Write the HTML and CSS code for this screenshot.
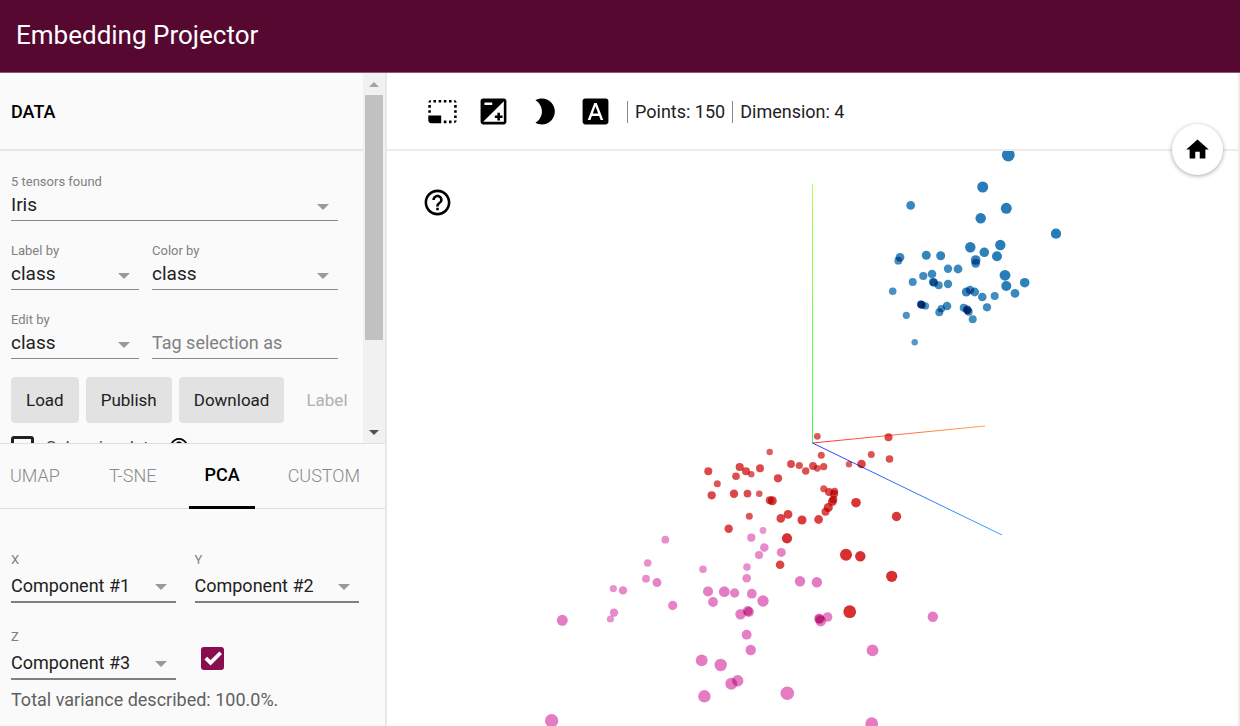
FILE: index.html
```html
<!DOCTYPE html>
<html lang="en">
<head>
<meta charset="utf-8">
<title>Embedding Projector</title>
<link rel="stylesheet" href="styles.css">
</head>
<body>
<header class="app-bar"><h1 class="app-title">Embedding Projector</h1></header>
<div class="workspace">
  <aside class="sidebar">
    <section class="data-panel">
      <div class="data-content">
        <h2 class="panel-title">DATA</h2>
        <div class="data-form">
          <div class="field">
            <label class="field-label" for="tensor">5 tensors found</label>
            <div class="select-box"><select id="tensor" class="control"><option>Iris</option></select></div>
          </div>
          <div class="field-row">
            <div class="field">
              <label class="field-label" for="label-by">Label by</label>
              <div class="select-box"><select id="label-by" class="control"><option>class</option></select></div>
            </div>
            <div class="field">
              <label class="field-label" for="color-by">Color by</label>
              <div class="select-box"><select id="color-by" class="control"><option>class</option></select></div>
            </div>
          </div>
          <div class="field-row">
            <div class="field">
              <label class="field-label" for="edit-by">Edit by</label>
              <div class="select-box"><select id="edit-by" class="control"><option>class</option></select></div>
            </div>
            <div class="field field-bare">
              <input id="tag" class="control control-text" type="text" placeholder="Tag selection as" aria-label="Tag selection as">
            </div>
          </div>
          <div class="actions">
            <button class="btn" type="button">Load</button>
            <button class="btn" type="button">Publish</button>
            <button class="btn" type="button">Download</button>
            <button class="btn btn-flat" type="button" disabled>Label</button>
          </div>
          <div class="sphereize">
            <input id="sphereize" class="check" type="checkbox">
            <label class="sphereize-label" for="sphereize">Sphereize data</label>
            <svg class="hint-icon" viewBox="2 2 20 20" aria-hidden="true"><path d="M11 18h2v-2h-2v2zm1-16C6.48 2 2 6.48 2 12s4.48 10 10 10 10-4.48 10-10S17.52 2 12 2zm0 18c-4.41 0-8-3.59-8-8s3.59-8 8-8 8 3.59 8 8-3.59 8-8 8zm0-14c-2.21 0-4 1.79-4 4h2c0-1.1.9-2 2-2s2 .9 2 2c0 2-3 1.75-3 5h2c0-2.25 3-2.5 3-5 0-2.21-1.79-4-4-4z"/></svg>
          </div>
        </div>
      </div>
      <div class="scrollbar" aria-hidden="true">
        <span class="arrow arrow-up"></span>
        <span class="track"><span class="thumb"></span></span>
        <span class="arrow arrow-down"></span>
      </div>
    </section>
    <section class="projection">
      <nav class="tabs">
        <button class="tab" type="button">UMAP</button>
        <button class="tab" type="button">T-SNE</button>
        <button class="tab tab-active" type="button">PCA</button>
        <button class="tab" type="button">CUSTOM</button>
      </nav>
      <div class="pca-form">
        <div class="field">
          <label class="field-label" for="pca-x">X</label>
          <div class="select-box"><select id="pca-x" class="control"><option>Component #1</option></select></div>
        </div>
        <div class="field">
          <label class="field-label" for="pca-y">Y</label>
          <div class="select-box"><select id="pca-y" class="control"><option>Component #2</option></select></div>
        </div>
        <div class="field">
          <label class="field-label" for="pca-z">Z</label>
          <div class="select-box"><select id="pca-z" class="control"><option>Component #3</option></select></div>
        </div>
        <label class="z-toggle">
          <input class="check" type="checkbox" checked aria-label="Use Z component">
          <svg class="tick" viewBox="0 0 24 24" aria-hidden="true"><path d="M5 11.500l5 5L20.500 6"/></svg>
        </label>
      </div>
      <p class="variance">Total variance described: 100.0%.</p>
    </section>
  </aside>
  <main class="stage">
    <div class="toolbar">
      <div class="tools">
        <button class="icon-btn" type="button" aria-label="Bounding box selection"><svg viewBox="0 0 24 24"><path d="M23 15h-2v2h2v-2zm0-4h-2v2h2v-2zm0 8h-2v2c1 0 2-1 2-2zM15 3h-2v2h2V3zm8 4h-2v2h2V7zm-2-4v2h2c0-1-1-2-2-2zM3 21h8v-6H1v4c0 1.100.9 2 2 2zM3 7H1v2h2V7zm12 12h-2v2h2v-2zm4-16h-2v2h2V3zm0 16h-2v2h2v-2zM3 3C2 3 1 4 1 5h2V3zm0 8H1v2h2v-2zm8-8H9v2h2V3zM7 3H5v2h2V3z"/></svg></button>
        <button class="icon-btn" type="button" aria-label="Edit mode"><svg viewBox="0 0 24 24"><path d="M15 17v2h2v-2h2v-2h-2v-2h-2v2h-2v2h2zm5-15H4c-1.100 0-2 .9-2 2v16c0 1.100.9 2 2 2h16c1.100 0 2-.9 2-2V4c0-1.100-.9-2-2-2zM5 5h6v2H5V5zm15 15H4L20 4v16z"/></svg></button>
        <button class="icon-btn" type="button" aria-label="Night mode"><svg viewBox="0 0 24 24"><path d="M10 2c-1.820 0-3.530.5-5 1.350C7.990 5.080 10 8.300 10 12s-2.010 6.920-5 8.650C6.470 21.500 8.180 22 10 22c5.520 0 10-4.480 10-10S15.520 2 10 2z"/></svg></button>
        <button class="icon-btn" type="button" aria-label="3D labels mode"><svg viewBox="0 0 24 24"><path d="M9.930 13.500h4.140L12 7.980zM20 2H4c-1.100 0-2 .9-2 2v16c0 1.100.9 2 2 2h16c1.100 0 2-.9 2-2V4c0-1.100-.9-2-2-2zm-4.050 16.500l-1.140-3H9.170l-1.120 3H5.960l5.110-13h1.860l5.110 13h-2.090z"/></svg></button>
      </div>
      <div class="stats">
        <span class="stat">Points: 150</span>
        <span class="stat">Dimension: 4</span>
      </div>
    </div>
    <div class="plot">
      <svg id="scene" class="scene" viewBox="387 151 851 575" preserveAspectRatio="xMidYMin slice" role="img" aria-label="Iris points projected on three components">
        <defs>
          <linearGradient id="axis-y" gradientUnits="userSpaceOnUse" x1="812" y1="443" x2="812" y2="184"><stop offset="0" stop-color="#33ff4d"/><stop offset="1" stop-color="#b3ff4d"/></linearGradient>
          <linearGradient id="axis-x" gradientUnits="userSpaceOnUse" x1="812" y1="443" x2="985" y2="426"><stop offset="0" stop-color="#ff3333"/><stop offset="1" stop-color="#ffa64d"/></linearGradient>
          <linearGradient id="axis-z" gradientUnits="userSpaceOnUse" x1="812" y1="443" x2="1002" y2="535"><stop offset="0" stop-color="#3333ff"/><stop offset="1" stop-color="#33a6ff"/></linearGradient>
        </defs>
        <path d="M812.500 443V184" stroke="url(#axis-y)"/>
        <path d="M812.500 443L985 426" stroke="url(#axis-x)"/>
        <path d="M812.500 443L1002 535" stroke="url(#axis-z)"/>
      </svg>
      <button class="icon-btn help-btn" type="button" aria-label="Help"><svg viewBox="0 0 24 24"><path d="M11 18h2v-2h-2v2zm1-16C6.480 2 2 6.480 2 12s4.480 10 10 10 10-4.480 10-10S17.520 2 12 2zm0 18c-4.410 0-8-3.590-8-8s3.590-8 8-8 8 3.590 8 8-3.590 8-8 8zm0-14c-2.210 0-4 1.790-4 4h2c0-1.100.9-2 2-2s2 .9 2 2c0 2-3 1.750-3 5h2c0-2.250 3-2.500 3-5 0-2.210-1.790-4-4-4z"/></svg></button>
      <button class="home-btn" type="button" aria-label="Reset view"><svg viewBox="0 0 24 24"><path d="M10 20v-6h4v6h5v-8h3L12 3 2 12h3v8z"/></svg></button>
    </div>
  </main>
</div>
<script src="points.js"></script>
</body>
</html>
```
FILE: styles.css
```css
* { box-sizing: border-box; }

body {
  margin: 0;
  height: 100vh;
  display: flex;
  flex-direction: column;
  overflow: hidden;
  background: #fff;
  color: #212121;
  font-family: Roboto, "Liberation Sans", sans-serif;
}

button, input, select { font: inherit; color: inherit; }
svg { display: block; fill: currentColor; }

.app-bar {
  flex: none;
  padding: 20px 16px 22px;
  background: #560830;
  border-bottom: 1px solid #8a5a74;
  color: #fff;
}
.app-title { margin: 0; font-size: 26px; line-height: 30px; font-weight: 400; }

.workspace { flex: 1; min-height: 0; display: flex; }

.sidebar {
  flex: none;
  width: 387px;
  display: flex;
  flex-direction: column;
  background: #fafafa;
  border-right: 2px solid #e8e8e8;
}

.data-panel { flex: 1; min-height: 0; display: flex; overflow: hidden; }
.data-content { flex: 1; overflow: hidden; }
.panel-title {
  margin: 0;
  padding: 27px 11px 25px;
  border-bottom: 2px solid #e6e6e6;
  color: #000;
  font-size: 18px;
  line-height: 24px;
  font-weight: 500;
}
.data-form { display: flex; flex-direction: column; gap: 22px; padding: 23px 25px 22px 11px; }
.field-row { display: grid; grid-template-columns: 128px 1fr; gap: 13px; }

.field { min-width: 0; display: flex; flex-direction: column; }
.field-bare { justify-content: flex-end; }
.field-label { color: #808080; font-size: 13px; line-height: 16px; }
.select-box { position: relative; }
.select-box::after {
  content: "";
  position: absolute;
  right: 9px;
  top: 50%;
  margin-top: -2px;
  border: 6px solid transparent;
  border-top-color: #999;
  border-bottom-width: 0;
  pointer-events: none;
}
.control {
  display: block;
  width: 100%;
  height: 31px;
  margin: 0;
  padding: 0 0 2px;
  border: 0;
  border-bottom: 1px solid #8a8a8a;
  border-radius: 0;
  background: none;
  appearance: none;
  font-size: 19px;
  outline: 0;
}
.control-text { font-size: 18px; }
.control::placeholder { color: #808080; opacity: 1; }

.actions { display: flex; gap: 7px; margin-top: -4px; }
.btn {
  height: 46px;
  padding: 0 15px 1px;
  border: 0;
  border-radius: 4px;
  background: #e2e2e2;
  font-size: 17px;
}
.btn-flat { background: none; color: #b0b0b0; }

.sphereize { display: flex; align-items: center; margin-top: -10px; }
.check {
  appearance: none;
  width: 23px;
  height: 23px;
  margin: 0;
  border: 3px solid #212121;
  border-radius: 3px;
}
.sphereize-label { margin-left: 12px; font-size: 17px; line-height: 24px; color: #444; }
.hint-icon { width: 18px; height: 18px; margin-left: 12px; color: #000; }

.scrollbar {
  flex: none;
  width: 22px;
  display: flex;
  flex-direction: column;
  align-items: center;
  background: #f1f1f1;
}
.arrow { flex: none; height: 22px; display: flex; align-items: center; }
.arrow::before { content: ""; border: 5px solid transparent; }
.arrow-up::before { border-bottom-color: #a3a3a3; border-top-width: 0; }
.arrow-down::before { border-top-color: #505050; border-bottom-width: 0; }
.track { flex: 1; width: 18px; }
.thumb { display: block; height: 75%; background: #c1c1c1; }

.projection { flex: none; border-top: 1px solid #dedede; }
.tabs { display: flex; gap: 18px; border-bottom: 1px solid #dedede; }
.tab {
  padding: 18px 15px 17px;
  margin-bottom: -1px;
  border: 0;
  border-bottom: 3px solid transparent;
  background: none;
  color: #8a8a8a;
  font-size: 18px;
  line-height: 27px;
  font-weight: 300;
}
.tab:first-child { padding-left: 10px; padding-right: 16px; }
.tab-active { padding-top: 17px; padding-bottom: 18px; border-bottom-color: #000; color: #000; font-weight: 500; }

.pca-form {
  display: grid;
  grid-template-columns: 1fr 1fr;
  gap: 26px 19px;
  padding: 43px 26px 0 11px;
}
.pca-form .control { height: 35px; padding: 2px 0 0; font-size: 18px; border-bottom: 2px solid #808080; }
.z-toggle {
  position: relative;
  align-self: start;
  justify-self: start;
  margin: 18px 0 0 6px;
}
.z-toggle .check { display: block; border: 0; background: #880e4f; }
.tick {
  position: absolute;
  inset: 0;
  width: 23px;
  height: 23px;
  fill: none;
  stroke: #fff;
  stroke-width: 4;
}
.variance { margin: 0; padding: 8px 11px 14px; color: #606060; font-size: 18px; line-height: 24px; }

.stage { flex: 1; min-width: 0; display: flex; flex-direction: column; border-right: 2px solid #ebebeb; }
.toolbar {
  flex: none;
  display: flex;
  align-items: center;
  gap: 16px;
  padding: 23px 40px 22px;
  border-bottom: 2px solid #ececec;
}
.tools { display: flex; gap: 20px; }
.icon-btn { display: block; width: 31px; height: 31px; padding: 0; border: 0; background: none; color: #000; }
.stats { display: flex; gap: 7px; }
.stat { padding-left: 7px; border-left: 1px solid #8a8a8a; font-size: 18px; line-height: 22px; }

.plot { flex: 1; min-height: 0; position: relative; }
.scene { width: 100%; height: 100%; isolation: isolate; }
.point { mix-blend-mode: multiply; }
.help-btn { position: absolute; left: 35px; top: 36px; }
.home-btn {
  position: absolute;
  right: 15px;
  top: -27px;
  width: 51px;
  height: 51px;
  padding: 12px;
  border: 0;
  border-radius: 50%;
  background: #fff;
  color: #000;
  box-shadow: 0 1px 4px rgba(0, 0, 0, 0.35);
}
```
FILE: points.js
```javascript
// One list per class; each point is [x, y, radius].
const classes = [
  { color: [31, 119, 180], points: [
    [1008.3,155,6.4],[982.7,187,5.5],[910.7,205.3,4.4],[1006.3,208.3,5.5],[980.7,218.3,5.2],[1056,233.7,5.1],
    [970.3,247.3,5.2],[1000.3,245,5.2],[984.3,252.3,4.8],[997,256.3,5],[900,257.3,4.4],[898.3,260.7,3.9],
    [926.3,255.3,4.5],[940.7,255.7,4.5],[975.7,260,4.8],[975.7,263.3,4.4],[948,268.7,4.2],[958,269,4.4],
    [932,274,4.3],[923.3,276,4.1],[912.7,282,4],[892.7,291.3,3.8],[933,282,4.1],[934,282.7,4.1],
    [938.7,285.3,4],[948,284,4.2],[1005,275.3,5.4],[1006.3,286,5],[1024.7,282.7,4.8],[1015,293.3,4.4],
    [966.3,292,4.5],[970,290,4.3],[974.7,292,4.4],[982.3,297,4.3],[994.7,296,4],[987,307.3,4.1],
    [921,304.3,3.9],[921,304.3,3.9],[922,305,3.9],[925.5,305.9,3.6],[939.3,312.3,4],[941.3,308.7,3.8],
    [947,306,4.3],[963.7,307.7,4],[967,309.7,4.2],[967.5,310,4.2],[968.7,311.7,4],[972.7,319.3,4],
    [906.3,315.3,3.6],[914.7,342.3,3.2]
  ] },
  { color: [214, 39, 40], points: [
    [817.3,436.3,3.4],[888.5,437.3,4],[769.7,452,3.2],[821.3,455.3,3.5],[871.3,454.5,3.5],[889.5,459,3.8],
    [849,464.3,3.2],[861.5,464,4.3],[791,464,3.9],[799.3,465.5,3.6],[805.7,471,3.7],[813,466,3.9],
    [817.3,468.3,3.4],[823.7,466.7,3.6],[708.3,471.3,4],[739.7,467,4.1],[746,471.3,4],[751.3,474.3,3.2],
    [736,476.3,3.8],[760,468.3,4],[778,478.3,4.1],[717.3,483.7,3.5],[711.7,495.3,4.1],[734,493.7,4.2],
    [747.5,493.6,3.9],[759.3,493.7,3.3],[769.8,500.3,4],[772.3,500.7,4.5],[823.7,488.8,3.5],[829,492,4],
    [834.6,491.3,3.6],[834,494,4.2],[833.3,499.5,4],[832.3,501.7,4.4],[828.3,507.5,4.5],[825.5,511.7,4],
    [856,502.7,4.8],[896.5,516.5,4.7],[749.3,516.3,3.5],[780.8,518.4,4.3],[788,514.4,4.4],[802,520,4.5],
    [818.6,519.5,4.4],[728.7,528.7,4.2],[787,538.3,5.1],[846,554.7,6],[860.3,556.3,5.2],[780.1,564.7,4.3],
    [891.7,576.3,5.6],[849.7,611.7,6.4]
  ] },
  { color: [227, 119, 194], points: [
    [763,530.5,3.4],[751.3,537.7,4.1],[764.3,547.5,4.3],[759,555,4.1],[781.3,552.4,4.5],[747,567,3.8],
    [746.7,578.3,4.3],[734.6,593,4.7],[751.8,593.7,4.9],[763,601,5.7],[740.5,614.2,5.2],[747.7,611,5],
    [748.9,612,5],[800,581.3,5.2],[816.9,582.3,5.2],[746.7,634.7,4.9],[750.7,650,5.2],[827.6,617,4.8],
    [819,618.5,4.8],[819.6,619,4.8],[820.7,621,5.4],[932.8,616.8,5.2],[872.5,650.3,5.9],[787.3,693.3,6.8],
    [871.7,723.7,6.4],[737.7,680.7,5.7],[731.3,683.7,6],[665.3,539.7,3.9],[647.7,563,3.8],[703,569.3,3.8],
    [646,578.7,3.9],[657,582.6,4.5],[613.3,588.6,3.6],[623,590.4,4.2],[614,612.6,4.2],[610.4,619,3.6],
    [562.3,620.3,5.5],[672.7,605.4,4.6],[708,591.4,5],[724.3,591.7,5.4],[713,602,4.9],[701.7,660.4,5.9],
    [720.7,665,6.2],[704.4,696.3,6.2],[551.6,720.8,6.7]
  ] }
];

const scene = document.getElementById("scene");
for (const { color, points } of classes) {
  for (const [x, y, r] of points) {
    const dot = document.createElementNS("http://www.w3.org/2000/svg", "circle");
    dot.setAttribute("class", "point");
    dot.setAttribute("cx", x);
    dot.setAttribute("cy", y);
    dot.setAttribute("r", r);
    // Smaller points are farther away and fade into the background.
    dot.setAttribute("fill-opacity", Math.min(0.96, 0.4 + r * 0.11).toFixed(2));
    dot.setAttribute("fill", `rgb(${color.join(",")})`);
    scene.appendChild(dot);
  }
}
```
